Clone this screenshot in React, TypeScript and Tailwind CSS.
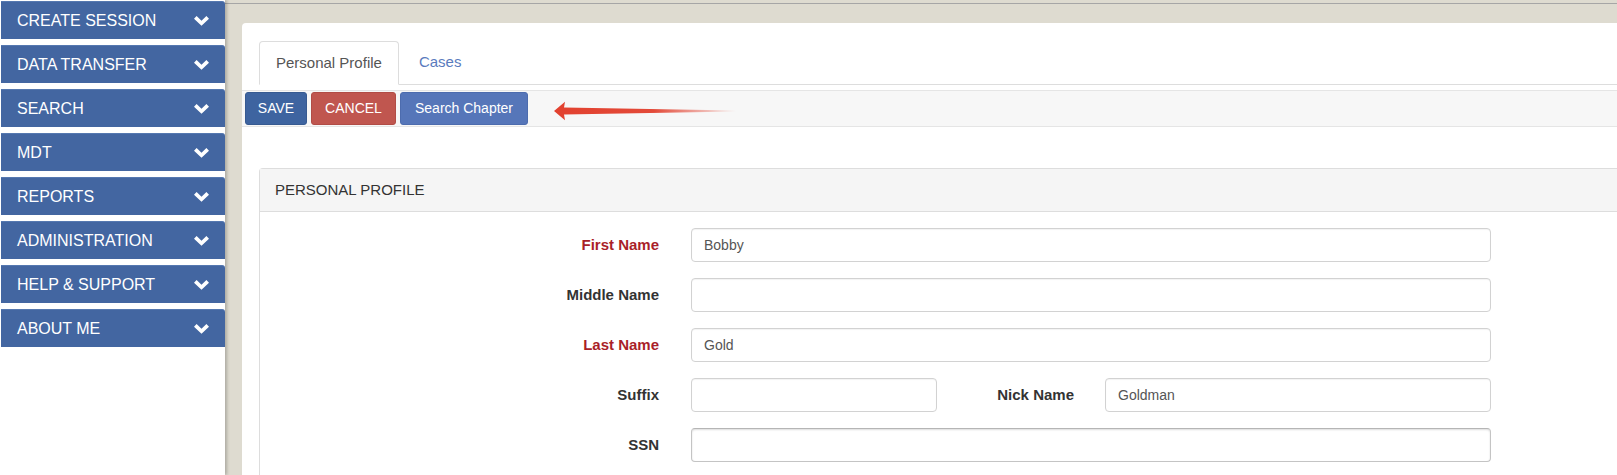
import type { JSX } from "react";

const menu = [
  "CREATE SESSION",
  "DATA TRANSFER",
  "SEARCH",
  "MDT",
  "REPORTS",
  "ADMINISTRATION",
  "HELP & SUPPORT",
  "ABOUT ME",
];

function Chevron(): JSX.Element {
  return (
    <svg width="15" height="10" viewBox="0 0 15 10" className="shrink-0">
      <polygon points="0,2.7 2.6,0.1 7.5,4.8 12.4,0.1 15,2.7 7.5,9.8" fill="#ffffff" />
    </svg>
  );
}

function Arrow(): JSX.Element {
  return (
    <svg width="182" height="20" viewBox="0 0 182 20" className="ml-[26px] mt-[4px]">
      <defs>
        <linearGradient id="arrowFade" x1="0" y1="0" x2="1" y2="0">
          <stop offset="0" stopColor="#e2412f" stopOpacity="1" />
          <stop offset="0.55" stopColor="#e2412f" stopOpacity="0.95" />
          <stop offset="1" stopColor="#e2412f" stopOpacity="0" />
        </linearGradient>
      </defs>
      <polygon
        points="0,10 11,0.8 10,6.6 182,9.4 182,10.4 10,13.6 11,19.2"
        fill="url(#arrowFade)"
      />
    </svg>
  );
}

type RowProps = {
  label: string;
  required?: boolean;
  children: React.ReactNode;
};

function Row({ label, required, children }: RowProps): JSX.Element {
  return (
    <div className="flex items-center h-[34px]">
      <label
        className={`w-[399px] text-right font-bold text-[15px] ${required ? "text-[#a91f29]" : "text-[#333333]"}`}
      >
        {label}
      </label>
      <div className="ml-[32px] w-[800px] flex items-center">{children}</div>
    </div>
  );
}

function TextInput({ value, className = "", inset = false }: { value?: string; className?: string; inset?: boolean }): JSX.Element {
  return (
    <input
      readOnly
      value={value ?? ""}
      className={`h-[34px] rounded-[4px] border bg-white px-[12px] text-[14px] text-[#555555] outline-none ${
        inset
          ? "border-[#c4c4c4] border-t-[#b5b5b5] shadow-[inset_0_1px_2px_rgba(0,0,0,0.14)]"
          : "border-[#d2d2d2] shadow-[inset_0_1px_1px_rgba(0,0,0,0.05)]"
      } ${className}`}
    />
  );
}

export default function App(): JSX.Element {
  return (
    <div
      className="flex h-[475px] w-full overflow-hidden bg-[#dedbd0]"
      style={{ fontFamily: '"Liberation Sans", Arial, sans-serif' }}
    >
      {/* sidebar */}
      <aside className="w-[225px] shrink-0 bg-white pt-[1px] shadow-[2px_0_3px_rgba(0,0,0,0.22)] z-10 flex flex-col gap-[6px]">
        {menu.map((item) => (
          <div
            key={item}
            className="ml-[1px] h-[38px] flex items-center justify-between bg-[#4366a1] rounded-tr-[3px] border-t border-[#5578b0] pl-[16px] pr-[16px] text-white text-[16px]"
          >
            <span>{item}</span>
            <Chevron />
          </div>
        ))}
      </aside>

      {/* main */}
      <main className="flex-1 min-w-0 flex flex-col pt-[3px]">
        <div className="flex-1 flex flex-col border-t border-[#a6a6a6] pt-[19px] pl-[17px]">
          <div className="flex-1 bg-white rounded-tl-[4px] flex flex-col">
            {/* tabs */}
            <div className="mt-[18px] ml-[17px] flex items-end border-b border-[#dddddd]">
              <div className="h-[44px] -mb-px flex items-center px-4 bg-white border border-[#dddddd] border-b-transparent rounded-t-[4px] text-[15px] text-[#555555]">
                Personal Profile
              </div>
              <div className="h-[43px] ml-1 flex items-center px-4 text-[15px] text-[#5a7bbd]">
                Cases
              </div>
            </div>

            {/* toolbar */}
            <div className="mt-[5px] h-[37px] flex items-center pl-[3px] bg-[#f7f7f7] border-y border-[#e5e5e5]">
              <div className="flex items-center gap-[4px]">
                <button className="h-[33px] w-[62px] rounded-[3px] bg-[#3e64a0] border border-[#375a91] text-white text-[14px]">
                  SAVE
                </button>
                <button className="h-[33px] w-[85px] rounded-[3px] bg-[#c0564f] border border-[#b14c46] text-white text-[14px]">
                  CANCEL
                </button>
                <button className="h-[33px] w-[128px] rounded-[3px] bg-[#5676b9] border border-[#4d6cae] text-white text-[14px]">
                  Search Chapter
                </button>
              </div>
              <Arrow />
            </div>

            {/* profile box */}
            <section className="mt-[41px] ml-[17px] flex-1 border-l border-t border-[#dddddd] rounded-tl-[4px]">
              <div className="h-[43px] flex items-center pl-[15px] bg-[#f5f5f5] border-b border-[#dddddd] text-[15px] text-[#333333]">
                PERSONAL PROFILE
              </div>
              <div className="pt-[16px] flex flex-col gap-[16px]">
                <Row label="First Name" required>
                  <TextInput value="Bobby" className="w-full" />
                </Row>
                <Row label="Middle Name">
                  <TextInput className="w-full" />
                </Row>
                <Row label="Last Name" required>
                  <TextInput value="Gold" className="w-full" />
                </Row>
                <Row label="Suffix">
                  <TextInput className="w-[246px]" />
                  <label className="w-[137px] text-right font-bold text-[15px] text-[#333333]">
                    Nick Name
                  </label>
                  <TextInput value="Goldman" className="ml-[31px] w-[386px]" />
                </Row>
                <Row label="SSN">
                  <TextInput className="w-full" inset />
                </Row>
              </div>
            </section>
          </div>
        </div>
      </main>
    </div>
  );
}
